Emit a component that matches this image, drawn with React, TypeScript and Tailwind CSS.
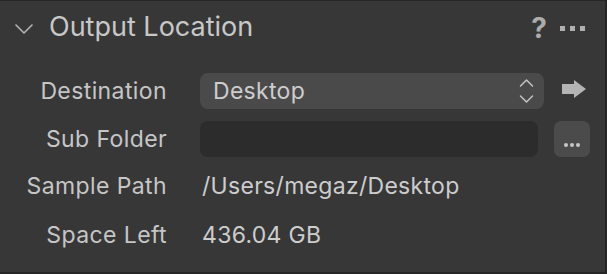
const rowLabel = "w-[167px] shrink-0 text-right text-[23px] tracking-[0.4px] text-[#c6c6c6]";
const value = "text-[23px] tracking-[0.3px] text-[#cdcdcd]";

const App = () => {
  return (
    <div className="h-[274px] w-[607px] overflow-hidden bg-[#373737] font-['Inter',sans-serif]">
      <div className="h-full w-full border-b-2 border-r-2 border-t border-[#262626]">
        <header className="flex h-[53px] items-center pl-[15px] pr-[20px]">
          <svg width="18" height="10" viewBox="0 0 18 10" className="mt-[2px]">
            <path d="M1 1l8 8 8-8" fill="none" stroke="#b4b4b4" strokeWidth="1.6" strokeLinecap="round" strokeLinejoin="round" />
          </svg>
          <h1 className="ml-[16px] text-[27px] text-[#c8c8c8]">Output Location</h1>
          <span className="ml-auto text-[28px] font-bold leading-none text-[#acacac]">?</span>
          <span className="ml-[13px] mt-[2px] flex gap-[5px]">
            <i className="h-[5px] w-[5px] bg-[#b0b0b0]" />
            <i className="h-[5px] w-[5px] bg-[#b0b0b0]" />
            <i className="h-[5px] w-[5px] bg-[#b0b0b0]" />
          </span>
        </header>

        <div className="mt-[19px] flex items-center">
          <span className={rowLabel}>Destination</span>
          <div className="ml-[33px] flex h-[36px] w-[344px] items-center rounded-[8px] bg-[#4a4a4a] pl-[13px] pr-[10px]">
            <span className={value}>Desktop</span>
            <svg className="ml-auto" width="15" height="26" viewBox="0 0 15 26">
              <path d="M1.5 8l6-6 6 6M1.5 18l6 6 6-6" fill="none" stroke="#c4c4c4" strokeWidth="1.5" strokeLinecap="round" strokeLinejoin="round" />
            </svg>
          </div>
          <svg className="mb-[5px] ml-[18px]" width="24" height="18" viewBox="0 0 24 18">
            <path d="M0 4h12V0l12 9-12 9v-4H0z" fill="#b4b4b4" />
          </svg>
        </div>

        <div className="mt-[12px] flex items-center">
          <span className={rowLabel}>Sub Folder</span>
          <div className="ml-[33px] h-[36px] w-[338px] rounded-[8px] bg-[#2c2c2c]" />
          <button className="ml-[16px] flex h-[36px] w-[36px] items-end justify-center gap-[2px] rounded-[7px] bg-[#4b4b4b] pb-[10px]">
            <i className="h-[4px] w-[4px] rounded-full bg-[#c8c8c8]" />
            <i className="h-[4px] w-[4px] rounded-full bg-[#c8c8c8]" />
            <i className="h-[4px] w-[4px] rounded-full bg-[#c8c8c8]" />
          </button>
        </div>

        <div className="mt-[13px] flex h-[33px] items-center">
          <span className={rowLabel}>Sample Path</span>
          <span className={`ml-[35px] ${value}`}>/Users/megaz/Desktop</span>
        </div>

        <div className="mt-[16px] flex h-[33px] items-center">
          <span className={rowLabel}>Space Left</span>
          <span className={`ml-[35px] ${value}`}>436.04 GB</span>
        </div>
      </div>
    </div>
  );
};

export default App;
